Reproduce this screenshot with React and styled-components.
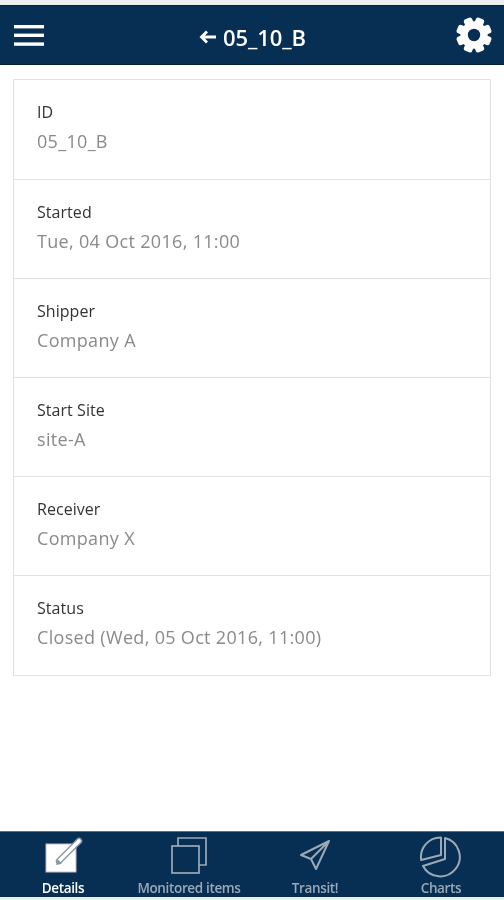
import React from "react";
import styled, { createGlobalStyle } from "styled-components";

const Global = createGlobalStyle`
  html, body { margin: 0; padding: 0; background: #fff; }
  body { font-family: "Open Sans", "Noto Sans", "Liberation Sans", sans-serif; }
`;

const Page = styled.div`
  width: 504px;
  height: 900px;
  display: flex;
  flex-direction: column;
  overflow: hidden;
  background: #eceded;
  padding: 5px 0 3px;
  box-sizing: border-box;
  filter: blur(0.4px);
`;

const Header = styled.header`
  height: 60px;
  flex: none;
  background: #072f54;
  border-top: 1px solid #02203d;
  border-bottom: 1px solid #02203d;
  box-sizing: border-box;
  display: flex;
  align-items: center;
  justify-content: space-between;
  padding: 0 12px 0 14px;
  color: #fff;
`;

const IconSlot = styled.div`
  width: 36px;
  display: flex;
  justify-content: ${(p) => (p.$end ? "flex-end" : "flex-start")};
`;

const Title = styled.h1`
  margin: 0 1px 0 0;
  padding-top: 3px;
  font-size: 22px;
  line-height: 28px;
  font-weight: 600;
  display: flex;
  align-items: center;
  gap: 7px;
  letter-spacing: -0.1px;
`;

const Main = styled.main`
  flex: 1;
  background: #fff;
  padding: 14px 13px 0;
`;

const Card = styled.section`
  border: 1px solid #e2e2e2;
`;

const Row = styled.div`
  height: 99.1px;
  box-sizing: border-box;
  padding: 22px 23px 0;
  border-top: ${(p) => (p.$first ? "none" : "1px solid #e2e2e2")};
`;

const Label = styled.div`
  font-size: 16px;
  line-height: 20px;
  color: #333;
  letter-spacing: 0.05px;
`;

const Value = styled.div`
  margin-top: 7px;
  font-size: 18px;
  line-height: 24px;
  color: #8a8a8a;
  letter-spacing: 0.32px;
`;

const TabBar = styled.nav`
  height: 66px;
  flex: none;
  background: #072f54;
  border-top: 1px solid #5b6f82;
  box-sizing: border-box;
  padding-top: 4px;
  display: grid;
  grid-template-columns: repeat(4, 126px);
`;

const Tab = styled.div`
  display: flex;
  flex-direction: column;
  align-items: center;
  color: ${(p) => (p.$active ? "#fff" : "#9aa9b8")};
`;

const TabIcon = styled.svg`
  display: block;
  width: 44px;
  height: 44px;
  flex: none;
`;

const TabLabel = styled.div`
  font-size: 13.5px;
  line-height: 16px;
  font-weight: 600;
  letter-spacing: -0.35px;
  white-space: nowrap;
`;

const Menu = () => (
  <svg width="30" height="21" viewBox="0 0 30 21" fill="#fff">
    <rect x="0" y="0" width="30" height="3.4" />
    <rect x="0" y="8.6" width="30" height="3.4" />
    <rect x="0" y="17.4" width="30" height="3.4" />
  </svg>
);

const Gear = () => (
  <svg width="36" height="36" viewBox="0 0 36 36">
    <g fill="#fff" transform="rotate(22.5 18 18)">
      {[0, 45, 90, 135, 180, 225, 270, 315].map((a) => (
        <rect key={a} x="13.6" y="0.2" width="8.8" height="10" rx="2.4" transform={`rotate(${a} 18 18)`} />
      ))}
      <circle cx="18" cy="18" r="13.6" />
    </g>
    <circle cx="18" cy="18" r="6.2" fill="#072f54" />
  </svg>
);

const Arrow = () => (
  <svg width="17" height="14" viewBox="0 0 17 14" fill="none" stroke="#fff" strokeWidth="2.8">
    <path d="M17 7H3M8 1.5L2.5 7 8 12.5" />
  </svg>
);

const DetailsIcon = () => (
  <TabIcon viewBox="0 0 44 44">
    <rect x="5" y="8" width="30" height="28" fill="#fff" stroke="#c9b9c4" strokeWidth="1" />
    <path d="M18 25L38 5" stroke="#8c97a6" strokeWidth="6.4" strokeLinecap="round" />
    <path d="M18 25L38 5" stroke="#fff" strokeWidth="3.6" strokeLinecap="round" />
    <path d="M15 29l1.5-6 4.5 4.5z" fill="#8c97a6" />
  </TabIcon>
);

const ItemsIcon = () => (
  <TabIcon viewBox="0 0 44 44" fill="none" stroke="#9aa9b8" strokeWidth="1.7">
    <rect x="5" y="10" width="27" height="27" />
    <path d="M11 10V2h28v27h-7" />
  </TabIcon>
);

const TransitIcon = () => (
  <TabIcon viewBox="0 0 44 44" fill="none" stroke="#9aa9b8" strokeWidth="2" strokeLinejoin="round">
    <path d="M36 5L8 19l10 4 5 10zM18 23L36 5" />
  </TabIcon>
);

const ChartsIcon = () => (
  <TabIcon viewBox="0 0 44 44" fill="none" stroke="#9aa9b8" strokeWidth="2" strokeLinejoin="round">
    <path d="M26 2A19.5 19.5 0 1 1 4 30L26 23Z" />
    <path d="M22 1.5A19.5 19.5 0 0 0 2.2 24L22 19Z" />
  </TabIcon>
);

const rows = [
  ["ID", "05_10_B"],
  ["Started", "Tue, 04 Oct 2016, 11:00"],
  ["Shipper", "Company A"],
  ["Start Site", "site-A"],
  ["Receiver", "Company X"],
  ["Status", "Closed (Wed, 05 Oct 2016, 11:00)"],
];

const tabs = [
  ["Details", <DetailsIcon key="d" />, true],
  ["Monitored items", <ItemsIcon key="m" />, false],
  ["Transit!", <TransitIcon key="t" />, false],
  ["Charts", <ChartsIcon key="c" />, false],
];

export default function App() {
  return (
    <Page>
      <Global />
      <Header>
        <IconSlot><Menu /></IconSlot>
        <Title><Arrow />05_10_B</Title>
        <IconSlot $end><Gear /></IconSlot>
      </Header>
      <Main>
        <Card>
          {rows.map(([l, v], i) => (
            <Row key={l} $first={i === 0}>
              <Label>{l}</Label>
              <Value>{v}</Value>
            </Row>
          ))}
        </Card>
      </Main>
      <TabBar>
        {tabs.map(([l, icon, active]) => (
          <Tab key={l} $active={active}>
            {icon}
            <TabLabel>{l}</TabLabel>
          </Tab>
        ))}
      </TabBar>
    </Page>
  );
}
